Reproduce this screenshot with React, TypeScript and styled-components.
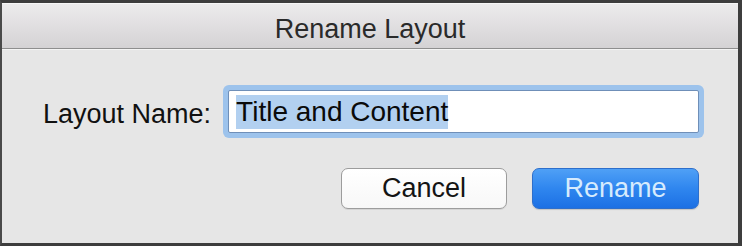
import React from "react";
import styled, { createGlobalStyle } from "styled-components";

const GlobalStyle = createGlobalStyle`
  html, body {
    margin: 0;
    padding: 0;
    background: #2e2e2e;
  }
  * {
    box-sizing: border-box;
  }
`;

const Window = styled.div`
  width: 742px;
  height: 246px;
  display: flex;
  flex-direction: column;
  background: #e5e5e5;
  border-top: 3px solid #3d3d3d;
  border-left: 2px solid #4a4a4a;
  border-right: 4px solid #3d3d3d;
  border-bottom: 3px solid #3d3d3d;
  font-family: "Liberation Sans", Arial, sans-serif;
  overflow: hidden;
`;

const TitleBar = styled.div`
  height: 46px;
  padding-top: 7px;
  line-height: 37px;
  text-align: center;
  font-size: 27px;
  color: #2a2a2a;
  background: linear-gradient(to bottom, #ecebec 0%, #dedcde 60%, #d4d2d4 100%);
  border-top: 1px solid #f6f6f6;
  border-bottom: 1px solid #8e8e8e;
`;

const Body = styled.div`
  flex: 1;
  display: flex;
  flex-direction: column;
  padding: 40px 39px 0 39px;
  background: #e6e6e6;
  border-top: 1px solid #f4f4f4;
`;

const FieldRow = styled.div`
  display: flex;
  align-items: center;
  gap: 17px;
`;

const Label = styled.label`
  font-size: 27px;
  color: #111;
  padding: 5px 0 0 2px;
  white-space: nowrap;
`;

const TextBox = styled.div`
  width: 471px;
  height: 43px;
  display: flex;
  align-items: center;
  padding-left: 7px;
  background: #ffffff;
  border: 1px solid #6f8fb8;
  box-shadow: 0 0 0 5px #9dc3ec;
  border-radius: 2px;
  font-size: 28px;
  color: #0a0a0a;
`;

const Selected = styled.span`
  background: #b2d0f0;
  padding: 2px 0 3px;
  line-height: 29px;
  margin-top: 1px;
`;

const ButtonRow = styled.div`
  display: flex;
  justify-content: flex-end;
  gap: 25px;
  margin-top: 35px;
`;

const Button = styled.button<{ $primary?: boolean }>`
  width: ${(p) => (p.$primary ? "167px" : "166px")};
  height: 41px;
  padding: 0;
  font-family: "Liberation Sans", Arial, sans-serif;
  font-size: 27px;
  border-radius: 7px;
  border: 1px solid ${(p) => (p.$primary ? "#2e6fcb" : "#9c9c9c")};
  color: ${(p) => (p.$primary ? "#d6ebfd" : "#141414")};
  background: ${(p) =>
    p.$primary
      ? "linear-gradient(to bottom, #4fa0f6 0%, #2f86ef 50%, #1c70e4 100%)"
      : "linear-gradient(to bottom, #ffffff 0%, #f7f7f7 100%)"};
  box-shadow: ${(p) =>
    p.$primary ? "0 1px 1px rgba(0,0,0,0.15)" : "0 1px 0 rgba(0,0,0,0.08)"};
`;

const App: React.FC = () => {
  return (
    <>
      <GlobalStyle />
      <Window>
        <TitleBar>Rename Layout</TitleBar>
        <Body>
          <FieldRow>
            <Label>Layout Name:</Label>
            <TextBox>
              <Selected>Title and Content</Selected>
            </TextBox>
          </FieldRow>
          <ButtonRow>
            <Button>Cancel</Button>
            <Button $primary>Rename</Button>
          </ButtonRow>
        </Body>
      </Window>
    </>
  );
};

export default App;
